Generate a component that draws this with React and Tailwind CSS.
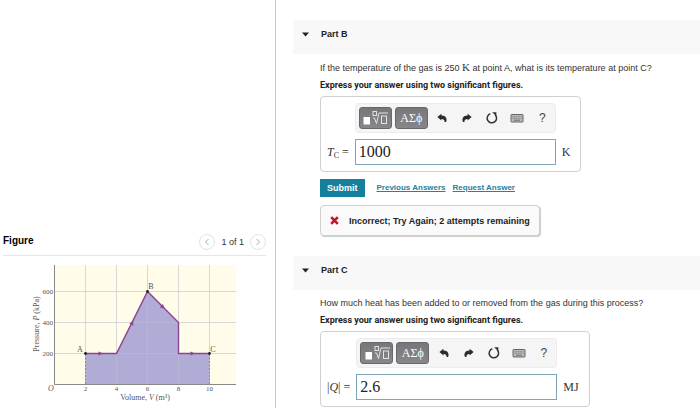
import { useState } from "react";

const UndoIcon = ({ flipped }) => (
  <svg viewBox="0 0 12 12" className={flipped ? "h-3 w-3 -scale-x-100" : "h-3 w-3"} aria-hidden="true">
    <path
      d="M1.400 5 5.400 1.800v1.700c3 .1 5.200 1.500 5.200 4.200 0 .9-.2 1.600-.7 2.300h-1.400c.3-2.100-.9-3-3.100-3.100v1.700z"
      fill="#2b2b2b"
    />
  </svg>
);

const ResetIcon = () => (
  <svg viewBox="0 0 14 14" className="h-3.5 w-3.5" aria-hidden="true">
    <path d="M5.300 2.700A4.700 4.700 0 1 0 10.300 3.900" fill="none" stroke="#333" strokeWidth="1.500" />
    <path d="M7.200 1.200h4.200v4.200z" fill="#333" />
  </svg>
);

const KeyboardIcon = () => (
  <svg viewBox="0 0 14 10" className="h-2.5 w-3.5" aria-hidden="true">
    <rect x="1" y="1.500" width="12" height="7.500" rx="0.500" fill="#bbb" stroke="#666" />
    <path d="M2.500 3.700h9M2.500 5.300h9" stroke="#777" strokeWidth="0.900" strokeDasharray="1 0.700" />
    <path d="M4 7.200h6" stroke="#666" strokeWidth="0.900" />
  </svg>
);

const TemplateIcon = () => (
  <svg viewBox="0 0 28 18" className="h-[18px] w-7" aria-hidden="true">
    <rect x="2.500" y="8" width="6.500" height="7.500" fill="#fff" />
    <g fill="none" stroke="#e4e4e4" strokeWidth="1">
      <rect x="12" y="2.500" width="3.500" height="4" />
      <path d="M12 9h1.500l2 5.500 2.500-10.500h9" />
      <rect x="20.500" y="7" width="5" height="7.500" />
    </g>
  </svg>
);

const Toolbar = () => (
  <div className="flex h-[30px] items-center rounded border border-[#ececec] bg-[#f5f5f5] pl-[3px]">
    <button
      type="button"
      aria-label="Templates"
      className="mr-[3px] flex h-[22px] w-[33px] items-center justify-center rounded-[3px] border border-[#68686c] bg-linear-to-b from-[#77777b] to-[#87878b]"
    >
      <TemplateIcon />
    </button>
    <button
      type="button"
      className="mr-0.5 h-[22px] w-[33px] rounded-[3px] border border-[#68686c] bg-linear-to-b from-[#77777b] to-[#87878b] font-['Liberation_Serif',serif] text-[12px] leading-5 text-white"
    >
      ΑΣϕ
    </button>
    <button type="button" aria-label="Undo" className="flex w-[25px] justify-center">
      <UndoIcon />
    </button>
    <button type="button" aria-label="Redo" className="flex w-[25px] justify-center">
      <UndoIcon flipped />
    </button>
    <button type="button" aria-label="Reset" className="flex w-[25px] justify-center">
      <ResetIcon />
    </button>
    <button type="button" aria-label="Keyboard" className="flex w-[25px] justify-center">
      <KeyboardIcon />
    </button>
    <button type="button" className="w-[25px] text-[12px] leading-4 text-[#444]">
      ?
    </button>
  </div>
);

const AnswerBox = ({ id, label, unit, initial }) => {
  const [value, setValue] = useState(initial);

  return (
    <div className="mt-1 grid w-fit grid-cols-[auto_auto_auto] items-center gap-1.5 rounded border border-[#d0d0d0] py-1.5 pr-2.5 pl-1.5 font-['Liberation_Serif',serif] text-[#333]">
      <div className="col-start-2 font-['Liberation_Sans',sans-serif]">
        <Toolbar />
      </div>
      <label htmlFor={id} className="col-start-1 text-[12px] leading-4 whitespace-nowrap">
        {label}
      </label>
      <input
        id={id}
        value={value}
        onChange={(e) => setValue(e.target.value)}
        className="h-[26px] w-full border border-[#7fa6b5] bg-white px-[3px] text-[16px] text-[#222] outline-none"
        size={1}
      />
      <span className="text-[12px] leading-4">{unit}</span>
    </div>
  );
};

const Part = ({ title, question, children }) => (
  <section className="pt-5">
    <h2 className="h-[34px] bg-[#f8f8f8] pt-[7px] text-[9px] leading-[14px] font-bold text-[#222]">
      <button type="button" className="flex items-center gap-3 pl-[9px]">
        <svg viewBox="0 0 7 5" className="h-[5px] w-[7px]" aria-hidden="true">
          <path d="M0 .5h7L3.500 4.500z" fill="#222" />
        </svg>
        {title}
      </button>
    </h2>
    <div className="pt-1.5 pl-[27px] text-[9px] leading-[14px] text-[#333]">
      <p>{question}</p>
      <p className="mt-[3px] font-[Roboto,sans-serif] font-bold text-[#222]">
        Express your answer using two significant figures.
      </p>
      {children}
    </div>
  </section>
);

const xTicks = [
  { x: 85.5, label: "2" },
  { x: 116.5, label: "4" },
  { x: 147.5, label: "6" },
  { x: 178.5, label: "8" },
  { x: 209.5, label: "10" },
];

const yTicks = [
  { y: 35.5, label: "600" },
  { y: 66.5, label: "400" },
  { y: 97.5, label: "200" },
];

const PressureVolumeChart = () => (
  <svg
    viewBox="0 0 275 152"
    className="w-full font-['Liberation_Serif',serif] text-[8px]"
    role="img"
    aria-label="Pressure versus volume"
  >
    <rect x="54.500" y="9" width="181.500" height="119.500" fill="#fffce9" />
    <path d="M85.500 97.500h31l31-62 31 31v31h31v31h-124z" fill="#b1acd6" />
    <g stroke="#d0cdd0" strokeWidth="0.800">
      {xTicks.map((t) => (
        <path key={t.label} d={`M${t.x} 9V128.500`} />
      ))}
      {yTicks.map((t) => (
        <path key={t.label} d={`M54.500 ${t.y}H236`} />
      ))}
    </g>
    <path d="M85.500 97.500h31l31-62 31 31v31h31v31h-124z" fill="#b1acd6" fillOpacity="0.700" />
    <path d="M54.500 9V128.500H236" fill="none" stroke="#8b8985" />
    <path d="M85.500 98v30M209.500 98v30" stroke="#77709e" strokeDasharray="2 1.500" strokeWidth="0.800" />
    <path d="M85.500 97.500h31l31-62 31 31v31h31" fill="none" stroke="#8b4492" strokeWidth="1.400" />
    <g fill="#8b4492">
      <path d="M98.500 95.500l4.500 2-4.500 2z" />
      <path d="M190.500 95.500l4.500 2-4.500 2z" />
      <path d="M133.200 64.800l.2 5-4-2z" />
      <path d="M164.800 52.600l-5-1.200 3-3.400z" />
    </g>
    <g fill="#222">
      <circle cx="85.500" cy="97.500" r="1.400" />
      <circle cx="147.500" cy="35.500" r="1.400" />
      <circle cx="209.500" cy="97.500" r="1.400" />
    </g>
    <g fill="#555">
      {xTicks.map((t) => (
        <text key={t.label} x={t.x} y="135" textAnchor="middle" className="text-[7px]">
          {t.label}
        </text>
      ))}
      {yTicks.map((t) => (
        <text key={t.label} x="53" y={t.y + 2} textAnchor="end" className="text-[7px]">
          {t.label}
        </text>
      ))}
      <text x="51" y="135" textAnchor="middle" fontStyle="italic">O</text>
      <text x="80" y="96" textAnchor="middle">A</text>
      <text x="151" y="33" textAnchor="middle">B</text>
      <text x="213" y="96" textAnchor="middle">C</text>
      <text x="145" y="144" textAnchor="middle">
        Volume, <tspan fontStyle="italic">V</tspan> (m³)
      </text>
      <text transform="translate(39 68) rotate(-90)" textAnchor="middle">
        Pressure, <tspan fontStyle="italic">P</tspan> (kPa)
      </text>
    </g>
  </svg>
);

const PagerButton = ({ label, d }) => (
  <button
    type="button"
    aria-label={label}
    className="flex h-4 w-4 items-center justify-center rounded-full border border-[#e3e3e3]"
  >
    <svg viewBox="0 0 6 8" className="h-2 w-1.5" aria-hidden="true">
      <path d={d} fill="none" stroke="#aaa" />
    </svg>
  </button>
);

const FigurePanel = () => (
  <aside className="flex flex-col justify-end border-r border-[#b5cddb]">
    <div className="mr-[9px] ml-[3px] flex items-start justify-between border-b border-[#e6e6e6]">
      <h2 className="text-[10px] leading-4 font-bold text-black">Figure</h2>
      <div className="flex items-center gap-1.5 pt-px pb-[5px] text-[9px] leading-4 text-[#333]">
        <PagerButton label="Previous figure" d="M4.500 1 1.500 4l3 3" />
        1 of 1
        <PagerButton label="Next figure" d="M1.500 1l3 3-3 3" />
      </div>
    </div>
    <PressureVolumeChart />
  </aside>
);

const App = () => {
  return (
    <div className="grid h-screen grid-cols-[276fr_424fr] overflow-hidden bg-white font-['Liberation_Sans',sans-serif]">
      <FigurePanel />
      <main className="min-w-0 overflow-hidden pl-[17px]">
        <Part
          title="Part B"
          question={
            <>
              If the temperature of the gas is 250{" "}
              <span className="font-['Liberation_Serif',serif] text-[11px]">K</span> at point A, what is its
              temperature at point C?
            </>
          }
        >
          <AnswerBox
            id="temperature-c"
            label={
              <>
                <i>T</i>
                <sub className="text-[8px]">C</sub> =
              </>
            }
            unit="K"
            initial="1000"
          />
          <div className="mt-[7px] flex items-center">
            <button type="button" className="h-[18px] bg-[#16809c] px-[7px] text-[9px] font-bold text-white">
              Submit
            </button>
            <a href="#previous" className="ml-3 text-[8px] font-bold text-[#287f9e] underline">
              Previous Answers
            </a>
            <a href="#request" className="ml-[7px] text-[8px] font-bold text-[#287f9e] underline">
              Request Answer
            </a>
          </div>
          <div className="mt-2 flex h-[31px] w-fit items-center gap-2.5 rounded border border-[#d0d0d0] bg-[#fafafa] px-[9px] font-bold text-[#222] shadow-[1px_1px_1px_#ccc]">
            <svg viewBox="0 0 9 9" className="h-[9px] w-[9px]" aria-hidden="true">
              <path d="M1.200 1.200l6.600 6.600M7.800 1.200l-6.600 6.600" stroke="#c8102e" strokeWidth="2.600" />
            </svg>
            Incorrect; Try Again; 2 attempts remaining
          </div>
        </Part>
        <Part title="Part C" question="How much heat has been added to or removed from the gas during this process?">
          <AnswerBox
            id="heat"
            label={
              <>
                |<i>Q</i>| =
              </>
            }
            unit="MJ"
            initial="2.6"
          />
        </Part>
      </main>
    </div>
  );
};

export default App;
